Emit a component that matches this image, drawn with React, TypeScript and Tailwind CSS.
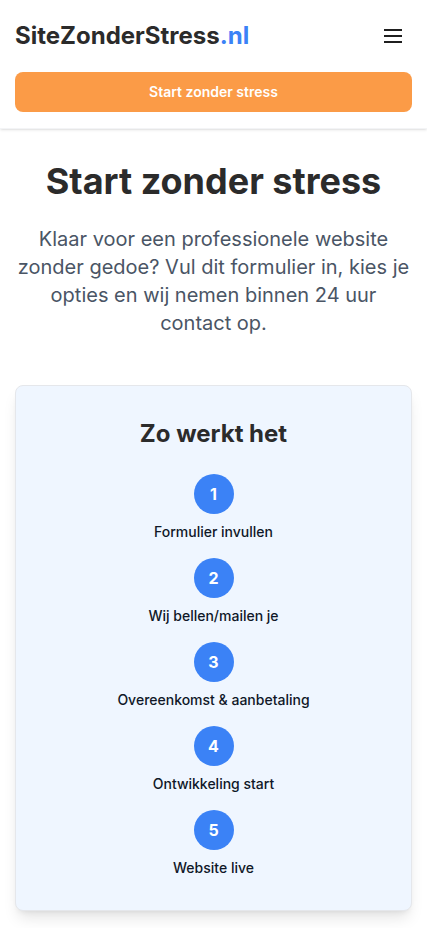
import React from "react";

const steps = [
  "Formulier invullen",
  "Wij bellen/mailen je",
  "Overeenkomst & aanbetaling",
  "Ontwikkeling start",
  "Website live",
];

export default function App() {
  return (
    <div className="min-h-screen bg-white" style={{ fontFamily: "Inter, 'Noto Sans', sans-serif" }}>
      <header className="bg-white border-b border-gray-100 shadow-sm px-[15px] pt-5 pb-4">
        <div className="flex items-center justify-between h-8">
          <div className="text-2xl font-bold text-[#2b2b2b]">
            SiteZonderStress<span className="text-[#3b82f6]">.nl</span>
          </div>
          <svg width="18" height="14" viewBox="0 0 18 14" fill="none" stroke="#1f1f1f" strokeWidth="2" className="mr-[10px]">
            <path d="M0 1h18M0 7h18M0 13h18" />
          </svg>
        </div>
        <button className="mt-5 w-full h-10 rounded-lg bg-[#fb9b47] text-white text-sm font-semibold">
          Start zonder stress
        </button>
      </header>
      <main className="px-[15px] pt-8 pb-8">
        <h1 className="text-4xl font-bold text-center text-[#2b2b2b]">Start zonder stress</h1>
        <p className="mt-6 text-xl leading-7 text-center text-gray-600">
          Klaar voor een professionele website zonder gedoe? Vul dit formulier in, kies je opties en wij nemen binnen 24 uur contact op.
        </p>
        <section className="mt-12 rounded-lg border border-gray-200 bg-[#eff6ff] shadow-lg p-8">
          <h2 className="text-2xl font-bold text-center text-[#2b2b2b]">Zo werkt het</h2>
          <div className="mt-6 flex flex-col gap-4">
            {steps.map((s, i) => (
              <div key={s} className="flex flex-col items-center">
                <div className="w-10 h-10 rounded-full bg-[#3b82f6] text-white font-bold text-base flex items-center justify-center">
                  {i + 1}
                </div>
                <div className="mt-2 text-sm font-medium text-gray-900 leading-5">{s}</div>
              </div>
            ))}
          </div>
        </section>
      </main>
    </div>
  );
}
